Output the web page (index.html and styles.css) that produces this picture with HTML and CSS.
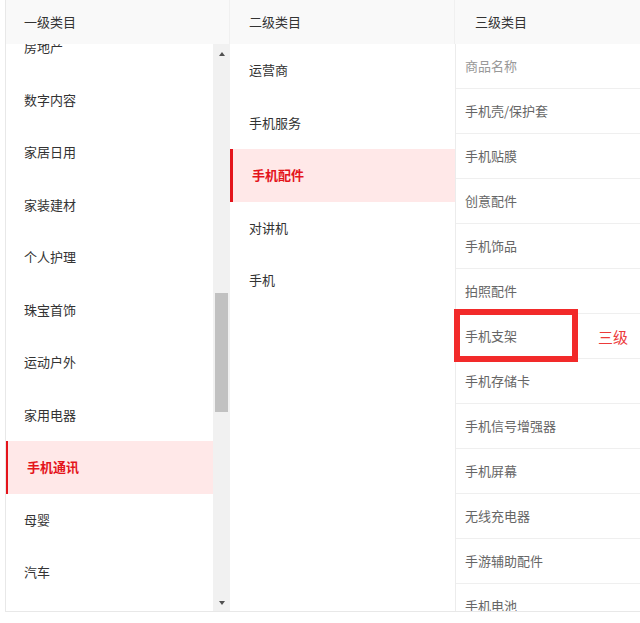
FILE: index.html
```html
<!DOCTYPE html>
<html lang="zh-CN">
<head>
<meta charset="utf-8">
<link rel="stylesheet" href="styles.css">
</head>
<body>
<div class="panel">
  <div class="col col1">
    <div class="head">一级类目</div>
    <div class="body">
      <div class="list">
        <div class="scroller">
          <div class="item">房地产</div>
          <div class="item">数字内容</div>
          <div class="item">家居日用</div>
          <div class="item">家装建材</div>
          <div class="item">个人护理</div>
          <div class="item">珠宝首饰</div>
          <div class="item">运动户外</div>
          <div class="item">家用电器</div>
          <div class="item active">手机通讯</div>
          <div class="item">母婴</div>
          <div class="item">汽车</div>
        </div>
      </div>
      <div class="sbar">
        <div class="sbtn"><span class="tri up"></span></div>
        <div class="strack"><div class="sthumb"></div></div>
        <div class="sbtn"><span class="tri down"></span></div>
      </div>
    </div>
  </div>
  <div class="col col2">
    <div class="head">二级类目</div>
    <div class="body">
      <div class="list">
        <div class="item">运营商</div>
        <div class="item">手机服务</div>
        <div class="item active">手机配件</div>
        <div class="item">对讲机</div>
        <div class="item">手机</div>
      </div>
    </div>
  </div>
  <div class="col col3">
    <div class="head">三级类目</div>
    <div class="body">
      <div class="rows">
        <div class="row ph">商品名称</div>
        <div class="row">手机壳/保护套</div>
        <div class="row">手机贴膜</div>
        <div class="row">创意配件</div>
        <div class="row">手机饰品</div>
        <div class="row">拍照配件</div>
        <div class="row">手机支架</div>
        <div class="row">手机存储卡</div>
        <div class="row">手机信号增强器</div>
        <div class="row">手机屏幕</div>
        <div class="row">无线充电器</div>
        <div class="row">手游辅助配件</div>
        <div class="row">手机电池</div>
      </div>
    </div>
    <div class="mark"></div>
    <div class="mark-label">三级</div>
  </div>
</div>
</body>
</html>
```
FILE: styles.css
```css
html, body {
  margin: 0;
  padding: 0;
  background: #fff;
  overflow: hidden;
}
body {
  font-family: "Noto Sans CJK SC", "Noto Sans", sans-serif;
  font-size: 13px;
  color: #333;
}
.panel {
  display: flex;
  margin-left: 5px;
  height: 611px;
  border-bottom: 1px solid #e8e8e8;
  overflow: hidden;
}
.col {
  display: flex;
  flex-direction: column;
  flex: none;
  height: 611px;
}
.col1 {
  width: 224px;
  border-left: 1px solid #e8e8e8;
}
.col2 {
  width: 225px;
}
.col3 {
  flex: 1;
  min-width: 0;
  position: relative;
}
.head {
  flex: none;
  height: 44px;
  line-height: 44px;
  background: #f9f9f9;
  color: #333;
  padding-left: 18px;
  border-right: 1px solid #f0f0f0;
}
.col2 .head {
  padding-left: 19px;
}
.col3 .head {
  padding-left: 20px;
  border-right: none;
}
.body {
  flex: 1;
  min-height: 0;
  display: flex;
  overflow: hidden;
}
.list {
  flex: 1;
  overflow: hidden;
}
.col1 .scroller {
  margin-top: -22.75px;
}
.item {
  height: 52.5px;
  line-height: 52.5px;
  padding-left: 18px;
  color: #333;
}
.col2 .item {
  padding-left: 19px;
}
.item.active {
  background: #ffe8e8;
  color: #e4141b;
  font-weight: bold;
  border-left: 3px solid #e4141b;
  padding-left: 19px;
}
.col1 .item.active {
  margin-left: -1px;
}
.sbar {
  flex: none;
  width: 17px;
  display: flex;
  flex-direction: column;
  background: #f1f1f1;
}
.sbtn {
  flex: none;
  height: 17px;
  display: flex;
  align-items: center;
  justify-content: center;
}
.tri {
  width: 0;
  height: 0;
  border-left: 3.5px solid transparent;
  border-right: 3.5px solid transparent;
}
.tri.up {
  border-bottom: 4px solid #505050;
  margin-top: 2px;
}
.tri.down {
  border-top: 4px solid #505050;
  margin-top: 1px;
}
.strack {
  flex: 1;
  padding: 0 2px;
}
.sthumb {
  margin-top: 232px;
  height: 119px;
  background: #c1c1c1;
}
.col3 .body {
  border-left: 1px solid #ececec;
}
.rows {
  flex: 1;
}
.row {
  height: 44px;
  line-height: 44px;
  border-bottom: 1px solid #efefef;
  padding-left: 9px;
  color: #666;
}
.row.ph {
  color: #999;
}
.mark {
  position: absolute;
  left: -1px;
  top: 309px;
  width: 112px;
  height: 41px;
  border: 6px solid #f22a2a;
}
.mark-label {
  position: absolute;
  left: 143px;
  top: 326px;
  font-size: 15px;
  line-height: 22px;
  color: #ec3a3a;
}
```
